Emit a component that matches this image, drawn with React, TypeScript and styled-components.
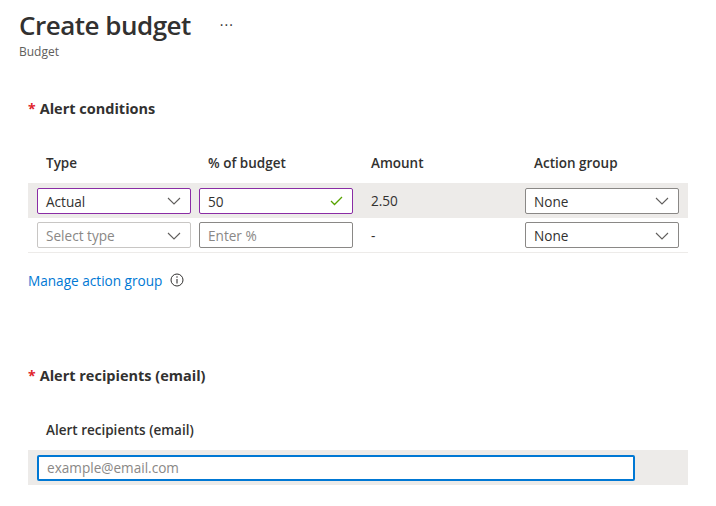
import React from "react";
import styled, { createGlobalStyle } from "styled-components";

const Global = createGlobalStyle`
  html, body { margin: 0; padding: 0; background: #ffffff; }
  body { font-family: "Open Sans", "Noto Sans", sans-serif; color: #323130; }
  * { box-sizing: border-box; }
`;

const Page = styled.div`
  width: 716px;
  height: 506px;
  overflow: hidden;
  padding: 6px 0 0 19px;
`;

const HeaderRow = styled.div`
  display: flex;
  align-items: center;
  gap: 29px;
  height: 38px;
`;

const Title = styled.h1`
  margin: 0;
  font-size: 26px;
  font-weight: 600;
  line-height: 38px;
  color: #323130;
  letter-spacing: -0.5px;
`;

const More = styled.span`
  font-size: 14px;
  color: #323130;
  letter-spacing: 1px;
  margin-top: -2px;
`;

const Subtitle = styled.div`
  font-size: 12px;
  line-height: 16px;
  color: #605e5c;
`;

const Body = styled.div`
  padding-left: 9px;
  width: 669px;
`;

const SectionTitle = styled.h2<{ $top: number }>`
  margin: ${(p) => p.$top}px 0 0 0;
  font-size: 14.5px;
  font-weight: 700;
  line-height: 20px;
  color: #323130;
  display: flex;
  align-items: baseline;
  gap: 4px;
`;

const Star = styled.span`
  color: #e0252c;
  font-weight: 700;
  font-size: 14px;
`;

const Table = styled.div`
  margin-top: 24px;
  display: flex;
  flex-direction: column;
`;

const Grid = styled.div<{ $bg?: boolean; $line?: boolean }>`
  display: grid;
  grid-template-columns: 154px 154px 156px 154px;
  column-gap: 8px;
  align-items: center;
  padding: 0 9px;
  background: ${(p) => (p.$bg ? "#edebe9" : "transparent")};
  border-bottom: ${(p) => (p.$line ? "1px solid #edebe9" : "none")};
`;

const HeadGrid = styled(Grid)`
  height: 40px;
`;

const DataGrid = styled(Grid)`
  height: 35px;
`;

const HeadCell = styled.div<{ $pad?: number }>`
  font-size: 13.5px;
  font-weight: 600;
  color: #323130;
  padding-left: ${(p) => p.$pad ?? 9}px;
  line-height: 18px;
`;

const Field = styled.div<{ $accent?: string; $muted?: boolean }>`
  height: 26px;
  display: flex;
  align-items: center;
  justify-content: space-between;
  padding: 1px 9px 0 8px;
  border: 1px solid ${(p) => (p.$muted ? "#c8c6c4" : p.$accent ?? "#8a8886")};
  border-radius: 2px;
  background: #ffffff;
  font-size: 13.6px;
  color: #323130;
`;

const Placeholder = styled.span`
  color: #8a8886;
`;

const Value = styled.span`
  color: #323130;
`;

const CellText = styled.div`
  font-size: 13.6px;
  color: #323130;
  padding-left: 10px;
`;

const LinkRow = styled.div`
  margin-top: 18px;
  display: flex;
  align-items: center;
  gap: 8px;
  height: 18px;
`;

const Link = styled.a`
  font-size: 13.6px;
  color: #0078d4;
  text-decoration: none;
`;

const RecipientHeader = styled.div`
  margin-top: 26px;
  height: 36px;
  display: flex;
  align-items: center;
  padding-left: 18px;
  font-size: 13.5px;
  font-weight: 600;
  color: #323130;
`;

const EmailRow = styled.div`
  margin-top: 2px;
  height: 35px;
  background: #edebe9;
  display: flex;
  align-items: center;
  padding-left: 9px;
`;

const EmailInput = styled.div`
  width: 598px;
  height: 26px;
  border: 2px solid #0078d4;
  border-radius: 2px;
  background: #ffffff;
  display: flex;
  align-items: center;
  padding-left: 8px;
  font-size: 13.6px;
  color: #8a8886;
`;

const Chevron = () => (
  <svg width="14" height="8" viewBox="0 0 14 8" fill="none">
    <path d="M1 1 L7 7 L13 1" stroke="#605e5c" strokeWidth="1.1" />
  </svg>
);

const Check = () => (
  <svg width="13" height="10" viewBox="0 0 13 10" fill="none">
    <path d="M1 5 L4.5 8.5 L12 1" stroke="#57a300" strokeWidth="1.3" />
  </svg>
);

const Info = () => (
  <svg width="14" height="14" viewBox="0 0 14 14" fill="none">
    <circle cx="7" cy="7" r="6" stroke="#323130" strokeWidth="1" />
    <path d="M7 6 L7 10.5" stroke="#323130" strokeWidth="1.1" />
    <circle cx="7" cy="4" r="0.75" fill="#323130" />
  </svg>
);

export default function App() {
  return (
    <>
      <Global />
      <Page>
        <HeaderRow>
          <Title>Create budget</Title>
          <More>···</More>
        </HeaderRow>
        <Subtitle>Budget</Subtitle>
        <Body>
          <SectionTitle $top={39}>
            <Star>*</Star>Alert conditions
          </SectionTitle>
          <Table>
            <HeadGrid>
              <HeadCell>Type</HeadCell>
              <HeadCell>% of budget</HeadCell>
              <HeadCell $pad={10}>Amount</HeadCell>
              <HeadCell>Action group</HeadCell>
            </HeadGrid>
            <DataGrid $bg>
              <Field $accent="#8a2da5">
                <Value>Actual</Value>
                <Chevron />
              </Field>
              <Field $accent="#8a2da5">
                <Value>50</Value>
                <Check />
              </Field>
              <CellText>2.50</CellText>
              <Field>
                <Value>None</Value>
                <Chevron />
              </Field>
            </DataGrid>
            <DataGrid $line>
              <Field $muted>
                <Placeholder>Select type</Placeholder>
                <Chevron />
              </Field>
              <Field>
                <Placeholder>Enter %</Placeholder>
              </Field>
              <CellText>-</CellText>
              <Field>
                <Value>None</Value>
                <Chevron />
              </Field>
            </DataGrid>
          </Table>
          <LinkRow>
            <Link href="#">Manage action group</Link>
            <Info />
          </LinkRow>
          <SectionTitle $top={77}>
            <Star>*</Star>Alert recipients (email)
          </SectionTitle>
          <RecipientHeader>Alert recipients (email)</RecipientHeader>
          <EmailRow>
            <EmailInput>example@email.com</EmailInput>
          </EmailRow>
        </Body>
      </Page>
    </>
  );
}
